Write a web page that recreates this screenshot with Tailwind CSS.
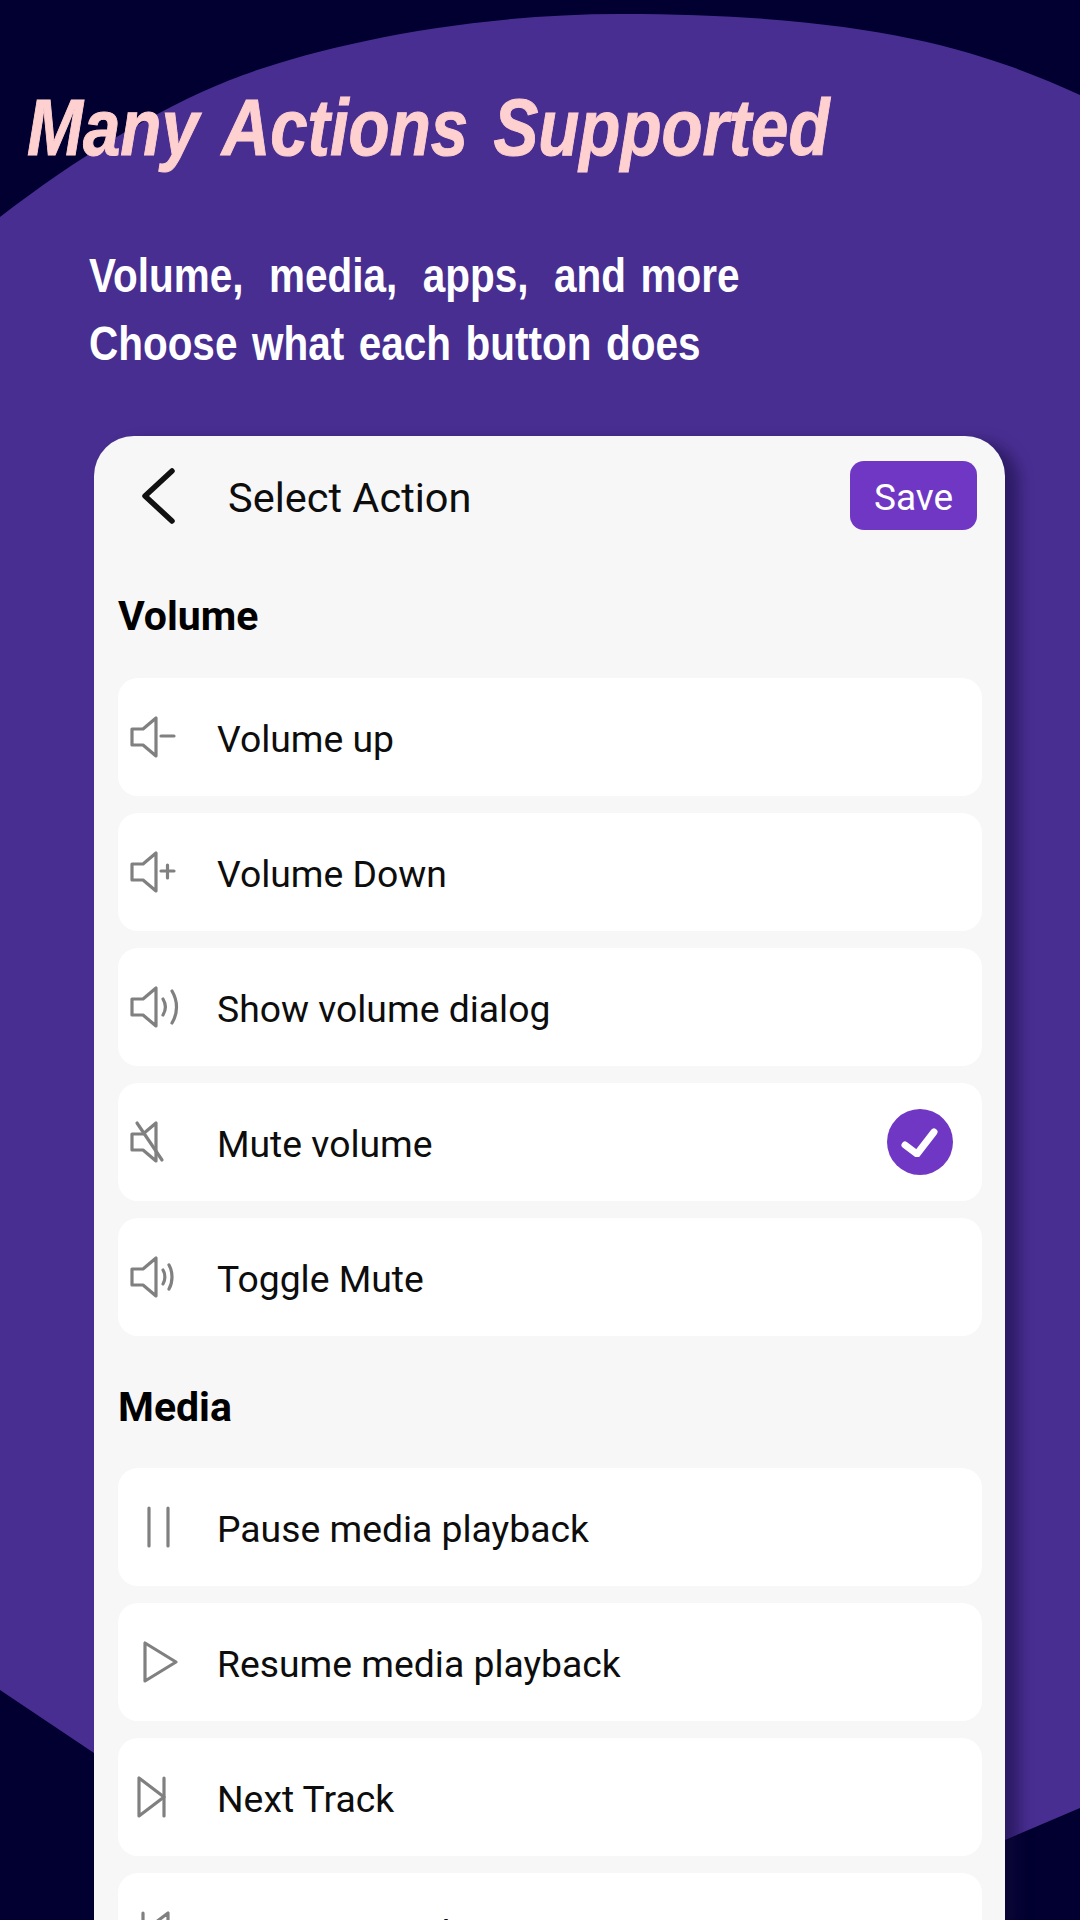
<!DOCTYPE html>
<html lang="en">
<head>
    <meta charset="UTF-8">
    <title>Many Actions Supported</title>
    <script src="https://cdn.jsdelivr.net/npm/@tailwindcss/browser@4"></script>
</head>
<body class="bg-[#010030] font-['Roboto',sans-serif] overflow-hidden">
<div class="relative w-[1080px] h-[1920px] overflow-hidden">

    <!-- Purple backdrop -->
    <svg class="absolute left-0 top-0 w-[1080px] h-[1920px]" viewBox="0 0 1080 1920"><path fill="#482e91" d="M0 217C77 158 153 111 230 80C310 48 460 14 620 14C880 14 990 54 1080 95V1808L1005 1840L900 1900H200L94 1753L0 1690Z"/></svg>

    <div class="relative flex flex-col h-full">
        <!-- Headline -->
        <h1 class="mt-[86px] ml-[27px] w-fit h-[84px] text-[80px] leading-[84px] font-bold italic text-[#ffd0d0] font-['Liberation_Sans',sans-serif] whitespace-nowrap origin-left scale-x-[0.84] [word-spacing:8px] [-webkit-text-stroke:1px_#ffd0d0]">Many Actions Supported</h1>
        <div class="mt-[72px] ml-[89px] w-fit text-white font-bold text-[48px] leading-[68px] font-['Liberation_Sans',sans-serif] origin-left scale-x-[0.843] whitespace-nowrap">
            <p class="[word-spacing:17px]">Volume, media, apps, <span class="[word-spacing:4px]">and more</span></p>
            <p class="[word-spacing:4px]">Choose what each button does</p>
        </div>

        <!-- Phone card -->
        <div class="mt-[58px] ml-[94px] w-[911px] flex-1 rounded-t-[40px] bg-[#f7f7f8] shadow-[14px_6px_14px_rgba(20,10,60,0.5)] pl-[24px] pr-[23px] overflow-hidden">
            <div class="flex items-center h-[69px] mt-[25px] pr-[5px]">
                <svg class="ml-[24px] w-[36px] h-[56px]" viewBox="0 0 36 56" fill="none" stroke="#111" stroke-width="5.500" stroke-linecap="round" stroke-linejoin="round"><path d="M30 3 3 28l27 25"/></svg>
                <span class="ml-[50px] pt-[6px] text-[41.500px] text-[#0d0d0d]">Select Action</span>
                <button class="ml-auto w-[127px] h-[69px] pt-[5px] rounded-[14px] bg-[#6f37c4] text-white text-[37px]">Save</button>
            </div>

            <h2 class="mt-[61px] text-[41px] leading-[50px] font-bold text-black">Volume</h2>
            <div class="mt-[37px] flex flex-col gap-[17px]">
                <div class="flex items-center h-[118px] rounded-[20px] bg-white">
                    <svg class="ml-[12px] w-[50px] h-[44px]" viewBox="0 0 50 44" fill="none" stroke="#808080" stroke-width="3.200" stroke-linejoin="round" stroke-linecap="round"><path d="M2 14h11L26 3v38L13 30H2z"/><path d="M31 21h13"/></svg>
                    <span class="ml-[37px] pt-[5px] text-[37.300px] text-[#0d0d0d]">Volume up</span>
                </div>
                <div class="flex items-center h-[118px] rounded-[20px] bg-white">
                    <svg class="ml-[12px] w-[50px] h-[44px]" viewBox="0 0 50 44" fill="none" stroke="#808080" stroke-width="3.200" stroke-linejoin="round" stroke-linecap="round"><path d="M2 14h11L26 3v38L13 30H2z"/><path d="M31 21h13M37.500 15v13"/></svg>
                    <span class="ml-[37px] pt-[5px] text-[37.300px] text-[#0d0d0d]">Volume Down</span>
                </div>
                <div class="flex items-center h-[118px] rounded-[20px] bg-white">
                    <svg class="ml-[12px] w-[50px] h-[44px]" viewBox="0 0 50 44" fill="none" stroke="#808080" stroke-width="3.200" stroke-linejoin="round" stroke-linecap="round"><path d="M2 14h11L26 3v38L13 30H2z"/><path d="M33 14c3 5 3 11 0 16M42 6c6 10 6 22 0 32"/></svg>
                    <span class="ml-[37px] pt-[5px] text-[37.300px] text-[#0d0d0d]">Show volume dialog</span>
                </div>
                <div class="flex items-center h-[118px] rounded-[20px] bg-white">
                    <svg class="ml-[12px] w-[50px] h-[44px]" viewBox="0 0 50 44" fill="none" stroke="#808080" stroke-width="3.200" stroke-linejoin="round" stroke-linecap="round"><path d="M2 14h11L26 3v38L13 30H2z"/><path d="M7 3l25 37"/></svg>
                    <span class="ml-[37px] pt-[5px] text-[37.300px] text-[#0d0d0d]">Mute volume</span>
                    <span class="ml-auto mr-[29px] flex items-center justify-center w-[66px] h-[66px] rounded-full bg-[#6f37c4]">
                        <svg class="w-[38px] h-[30px]" viewBox="0 0 38 30" fill="none" stroke="#fff" stroke-width="7" stroke-linecap="round" stroke-linejoin="round"><path d="M4 18l12 9L33 5"/></svg>
                    </span>
                </div>
                <div class="flex items-center h-[118px] rounded-[20px] bg-white">
                    <svg class="ml-[12px] w-[50px] h-[44px]" viewBox="0 0 50 44" fill="none" stroke="#808080" stroke-width="3.200" stroke-linejoin="round" stroke-linecap="round"><path d="M2 14h11L26 3v38L13 30H2z"/><path d="M33 15c2.500 4 2.500 10 0 14M39 10c4 7 4 17 0 24"/></svg>
                    <span class="ml-[37px] pt-[5px] text-[37.300px] text-[#0d0d0d]">Toggle Mute</span>
                </div>
            </div>

            <h2 class="mt-[46px] text-[41px] leading-[50px] font-bold text-black">Media</h2>
            <div class="mt-[36px] flex flex-col gap-[17px]">
                <div class="flex items-center h-[118px] rounded-[20px] bg-white">
                    <svg class="ml-[12px] w-[50px] h-[44px]" viewBox="0 0 50 44" fill="none" stroke="#808080" stroke-width="3.200" stroke-linecap="round"><path d="M19 3v38M38 3v38"/></svg>
                    <span class="ml-[37px] pt-[5px] text-[37.300px] text-[#0d0d0d]">Pause media playback</span>
                </div>
                <div class="flex items-center h-[118px] rounded-[20px] bg-white">
                    <svg class="ml-[12px] w-[50px] h-[44px]" viewBox="0 0 50 44" fill="none" stroke="#808080" stroke-width="3.200" stroke-linejoin="round"><path d="M15 3v38l31-19z"/></svg>
                    <span class="ml-[37px] pt-[5px] text-[37.300px] text-[#0d0d0d]">Resume media playback</span>
                </div>
                <div class="flex items-center h-[118px] rounded-[20px] bg-white">
                    <svg class="ml-[12px] w-[50px] h-[44px]" viewBox="0 0 50 44" fill="none" stroke="#808080" stroke-width="3.200" stroke-linejoin="round" stroke-linecap="round"><path d="M9 3v38l25-19z"/><path d="M34 3v38"/></svg>
                    <span class="ml-[37px] pt-[5px] text-[37.300px] text-[#0d0d0d]">Next Track</span>
                </div>
                <div class="flex items-center h-[118px] rounded-[20px] bg-white">
                    <svg class="ml-[12px] w-[50px] h-[44px]" viewBox="0 0 50 44" fill="none" stroke="#808080" stroke-width="3.200" stroke-linejoin="round" stroke-linecap="round"><path d="M38 3v38L13 22z"/><path d="M13 3v38"/></svg>
                    <span class="ml-[37px] pt-[5px] text-[37.300px] text-[#0d0d0d]">Previous Track</span>
                </div>
            </div>
        </div>
    </div>
</div>
</body>
</html>
